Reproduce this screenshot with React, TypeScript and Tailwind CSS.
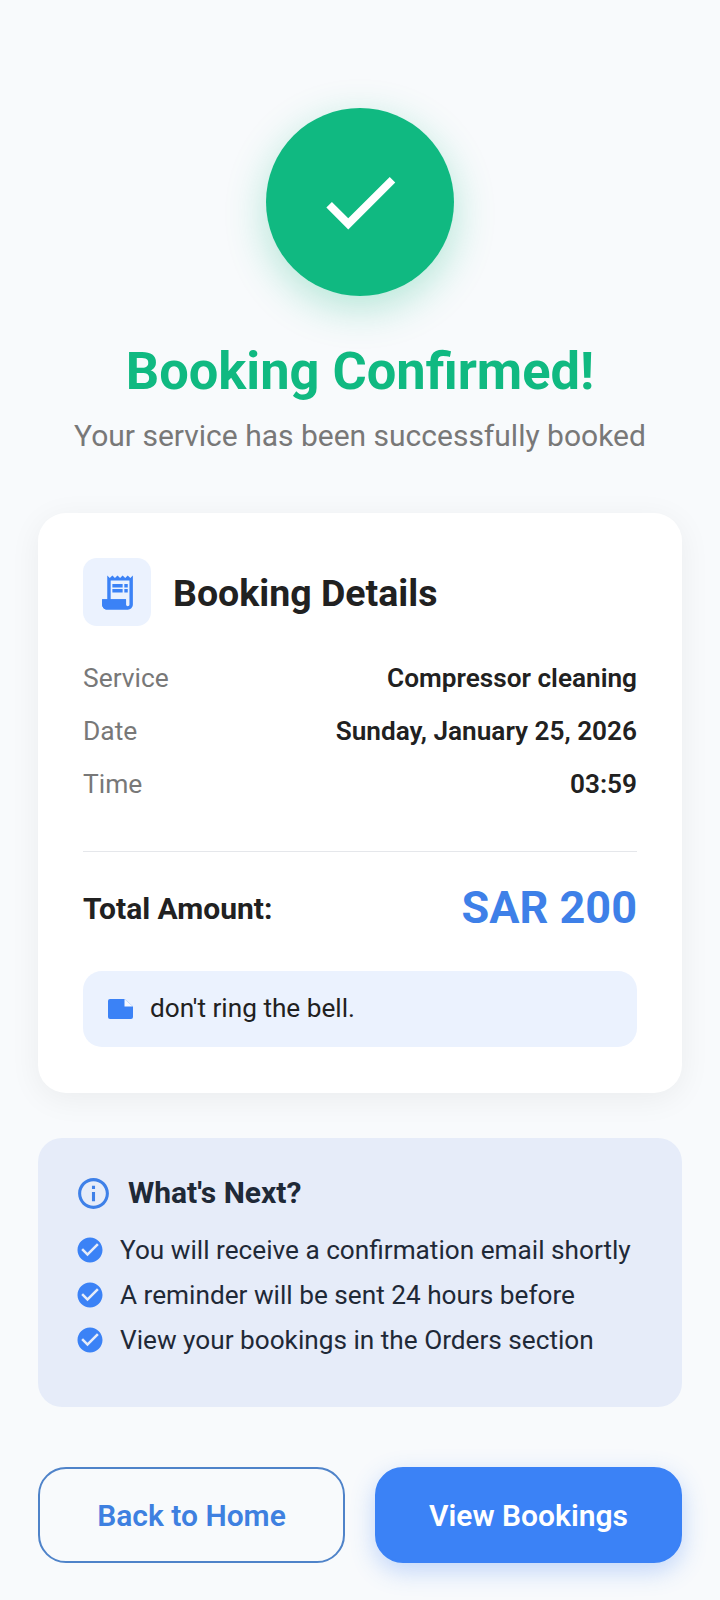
const font = "font-['Roboto',sans-serif]";

function CheckBadge() {
  return (
    <svg viewBox="0 0 24 24" className="h-[30px] w-[30px] shrink-0 fill-[#3b82f6]">
      <path d="M12 2C6.48 2 2 6.48 2 12s4.48 10 10 10 10-4.48 10-10S17.52 2 12 2zm-2 15-5-5 1.41-1.41L10 14.17l7.59-7.59L19 8l-9 9z" />
    </svg>
  );
}

const DETAILS = [
  ['Service', 'Compressor cleaning'],
  ['Date', 'Sunday, January 25, 2026'],
  ['Time', '03:59'],
];

const NEXT_STEPS = [
  'You will receive a confirmation email shortly',
  'A reminder will be sent 24 hours before',
  'View your bookings in the Orders section',
];

export default function App() {
  return (
    <div className={`${font} flex min-h-[1600px] w-[720px] flex-col bg-[#f8fafc] px-[38px] pt-[108px]`}>
      {/* Success header */}
      <div className="flex flex-col items-center">
        <div className="flex h-[188px] w-[188px] items-center justify-center rounded-full bg-[#10b981] shadow-[0_12px_40px_rgba(16,185,129,0.3)]">
          <svg viewBox="0 0 24 24" className="h-[94px] w-[94px] fill-white">
            <path d="M9 16.17 4.83 12l-1.42 1.41L9 19 21 7l-1.41-1.41z" />
          </svg>
        </div>
        <h1 className="mt-[43px] text-[52.4px] font-bold leading-[64px] text-[#10b981]">Booking Confirmed!</h1>
        <p className="mt-[13px] text-[30px] leading-[40px] text-[#787878]">Your service has been successfully booked</p>
      </div>

      {/* Booking details card */}
      <div className="mt-[57px] rounded-[28px] bg-white px-[45px] pb-[46px] pt-[45px] shadow-[0_6px_32px_rgba(0,0,0,0.06)]">
        <div className="flex items-center gap-[22px]">
          <div className="flex h-[68px] w-[68px] items-center justify-center rounded-[14px] bg-[#ebf2fe]">
            <svg viewBox="0 0 24 24" className="h-[41px] w-[41px] fill-[#3b82f6]">
              <path d="M19.5 3.5 18 2l-1.500 1.500L15 2l-1.500 1.500L12 2l-1.500 1.500L9 2 7.500 3.500 6 2v14H3v3c0 1.660 1.340 3 3 3h12c1.660 0 3-1.340 3-3V2l-1.500 1.500zM19 19c0 .55-.45 1-1 1s-1-.45-1-1v-3H8V5h11v14z" />
              <path d="M3 16h14v3c0 1.200.6 2.400 1.500 3H6c-1.660 0-3-1.340-3-3z" />
              <path d="M9 7h6v2H9zm7 0h2v2h-2zm-7 3h6v2H9zm7 0h2v2h-2z" />
            </svg>
          </div>
          <h2 className="pt-[2px] text-[37.5px] font-bold leading-[46px] text-[#212121]">Booking Details</h2>
        </div>

        <div className="mt-[35px] flex flex-col gap-[19px]">
          {DETAILS.map(([label, value]) => (
            <div key={label} className="flex items-center justify-between leading-[34px]">
              <span className="text-[26.4px] text-[#787878]">{label}</span>
              <span className="text-[26.2px] font-semibold text-[#212121]">{value}</span>
            </div>
          ))}
        </div>

        <div className="mt-[50px] h-px bg-[#e5e7eb]" />

        <div className="mt-[28px] flex items-center justify-between">
          <span className="text-[30px] font-bold text-[#212121]">Total Amount:</span>
          <span className="text-[45px] font-bold leading-[56px] text-[#3e80e8]">SAR 200</span>
        </div>

        <div className="mt-[35px] flex h-[76px] items-center gap-[17px] rounded-[19px] bg-[#ebf2fe] px-[25px]">
          <svg viewBox="0 0 25 20" className="h-[20px] w-[25px]">
            <path className="fill-[#3b82f6]" d="M2 0h14.500L25 7.500V18a2 2 0 0 1-2 2H2a2 2 0 0 1-2-2V2a2 2 0 0 1 2-2z" />
            <path className="fill-[#f7f9ff]" d="M16.500 0 25 7.500h-8.500z" />
          </svg>
          <span className="text-[26.2px] text-[#212121]">don't ring the bell.</span>
        </div>
      </div>

      {/* What's next panel */}
      <div className="mt-[45px] rounded-[24px] bg-[#e6ecf9] px-[37px] pb-[50px] pt-[36px]">
        <div className="flex items-center gap-[16px]">
          <svg viewBox="0 0 24 24" className="h-[37px] w-[37px] fill-[#3e80e8]">
            <path d="M11 7h2v2h-2zm0 4h2v6h-2zm1-9C6.480 2 2 6.480 2 12s4.480 10 10 10 10-4.480 10-10S17.520 2 12 2zm0 18c-4.410 0-8-3.590-8-8s3.590-8 8-8 8 3.590 8 8-3.590 8-8 8z" />
          </svg>
          <h3 className="text-[30px] font-bold leading-[38px] text-[#1f2937]">What's Next?</h3>
        </div>
        <div className="mt-[21px] flex flex-col gap-[11px]">
          {NEXT_STEPS.map((step) => (
            <div key={step} className="flex items-center gap-[15px] leading-[34px]">
              <CheckBadge />
              <span className="text-[26.2px] text-[#1f2937]">{step}</span>
            </div>
          ))}
        </div>
      </div>

      {/* Actions */}
      <div className="mt-[60px] flex gap-[30px]">
        <button className="h-[96px] flex-1 rounded-[28px] border-2 border-[#4f83c9] text-[30px] font-semibold text-[#3e80e0]">
          Back to Home
        </button>
        <button className="h-[96px] flex-1 rounded-[28px] border-2 border-[#3b82f6] bg-[#3b82f6] text-[30px] font-semibold text-white shadow-[0_8px_24px_rgba(59,130,246,0.3)]">
          View Bookings
        </button>
      </div>
    </div>
  );
}
